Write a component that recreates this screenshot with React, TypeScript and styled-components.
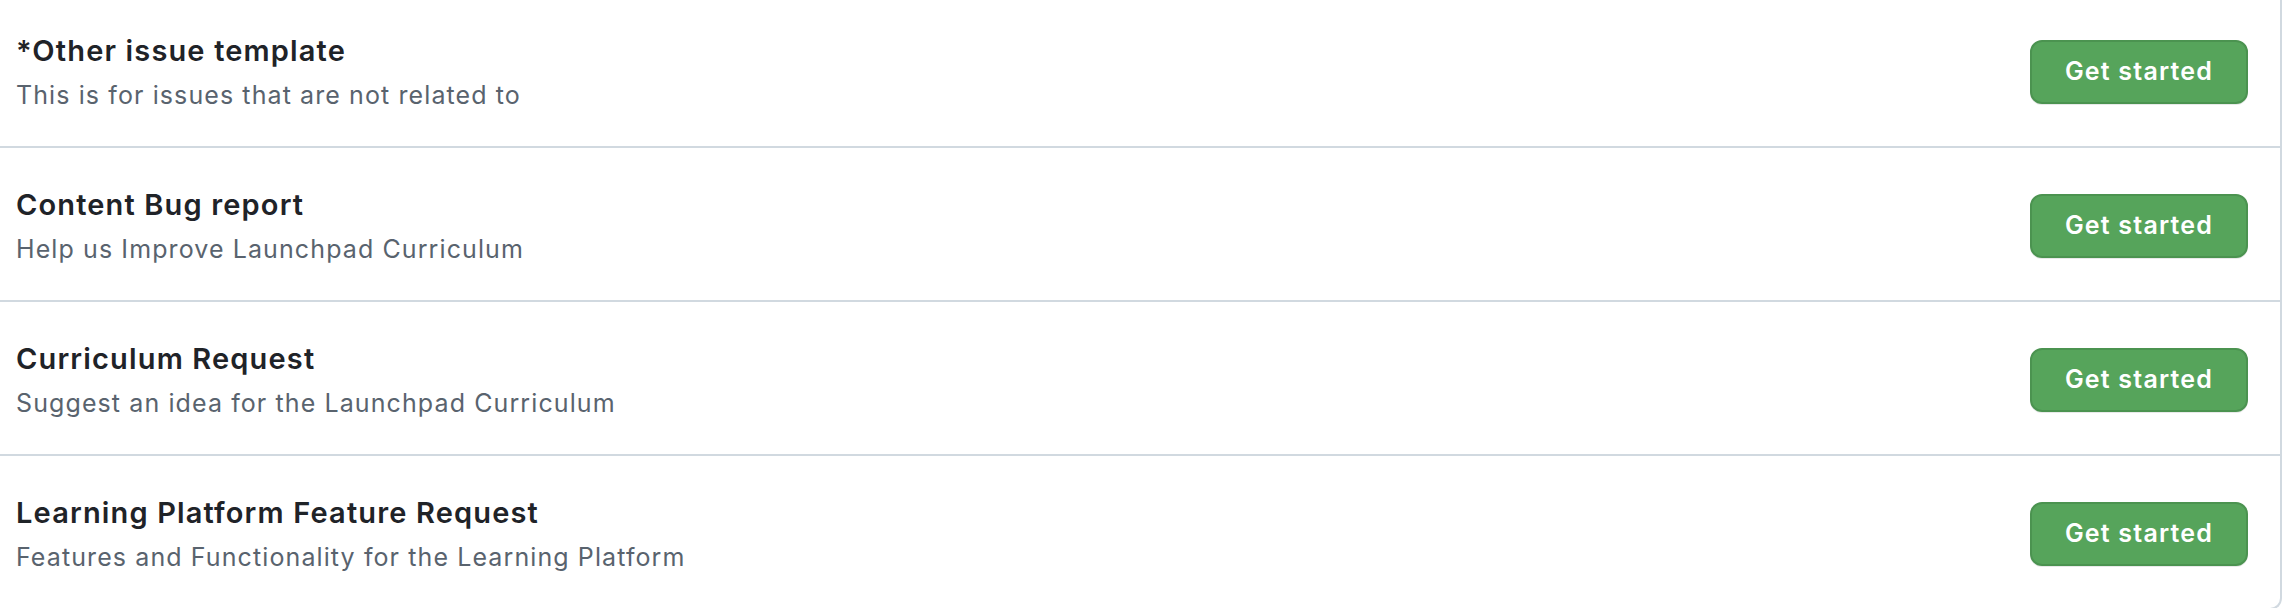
import React from "react";
import styled, { createGlobalStyle } from "styled-components";

const GlobalStyle = createGlobalStyle`
  html, body {
    margin: 0;
    padding: 0;
    background: #ffffff;
    overflow: hidden;
  }
  body {
    font-family: Inter, "Noto Sans", "Liberation Sans", sans-serif;
    -webkit-font-smoothing: antialiased;
  }
`;

const Page = styled.div`
  width: 2284px;
  height: 608px;
  overflow: hidden;
  background: #ffffff;
`;

const Panel = styled.div`
  width: 2282px;
  margin-top: -6px;
  box-sizing: border-box;
  border-right: 2px solid #d1d9e0;
  border-bottom: 2px solid #d1d9e0;
  border-bottom-right-radius: 12px;
  display: flex;
  flex-direction: column;
`;

const Row = styled.div<{ $last?: boolean }>`
  display: flex;
  align-items: center;
  justify-content: space-between;
  box-sizing: content-box;
  height: 149px;
  padding: 3px 32px 0 16px;
  border-bottom: ${(p) => (p.$last ? "none" : "2px solid #d1d9e0")};
`;

const Info = styled.div`
  display: flex;
  flex-direction: column;
  gap: 6px;
`;

const Title = styled.h3`
  margin: 0;
  font-size: 29px;
  line-height: 40px;
  font-weight: 600;
  color: #1f2328;
  letter-spacing: 1.15px;
`;

const Description = styled.p`
  margin: 0;
  font-size: 25px;
  line-height: 36px;
  font-weight: 400;
  color: #59636e;
  letter-spacing: 1.1px;
`;

const StartButton = styled.button`
  box-sizing: border-box;
  width: 218px;
  height: 64px;
  border-radius: 12px;
  border: 2px solid #4b9350;
  background: #56a45b;
  color: #ffffff;
  font-family: Inter, "Noto Sans", "Liberation Sans", sans-serif;
  font-size: 25px;
  font-weight: 600;
  letter-spacing: 1.2px;
  line-height: 1;
  cursor: pointer;
  box-shadow: 0 1px 0 rgba(31, 35, 40, 0.1);
  display: flex;
  align-items: center;
  justify-content: center;
  padding: 0;
`;

const templates = [
  {
    title: "*Other issue template",
    description: "This is for issues that are not related to",
  },
  {
    title: "Content Bug report",
    description: "Help us Improve Launchpad Curriculum",
  },
  {
    title: "Curriculum Request",
    description: "Suggest an idea for the Launchpad Curriculum",
  },
  {
    title: "Learning Platform Feature Request",
    description: "Features and Functionality for the Learning Platform",
  },
];

export default function App() {
  return (
    <Page>
      <GlobalStyle />
      <Panel>
        {templates.map((t, i) => (
          <Row key={t.title} $last={i === templates.length - 1}>
            <Info>
              <Title>{t.title}</Title>
              <Description>{t.description}</Description>
            </Info>
            <StartButton type="button">Get started</StartButton>
          </Row>
        ))}
      </Panel>
    </Page>
  );
}
